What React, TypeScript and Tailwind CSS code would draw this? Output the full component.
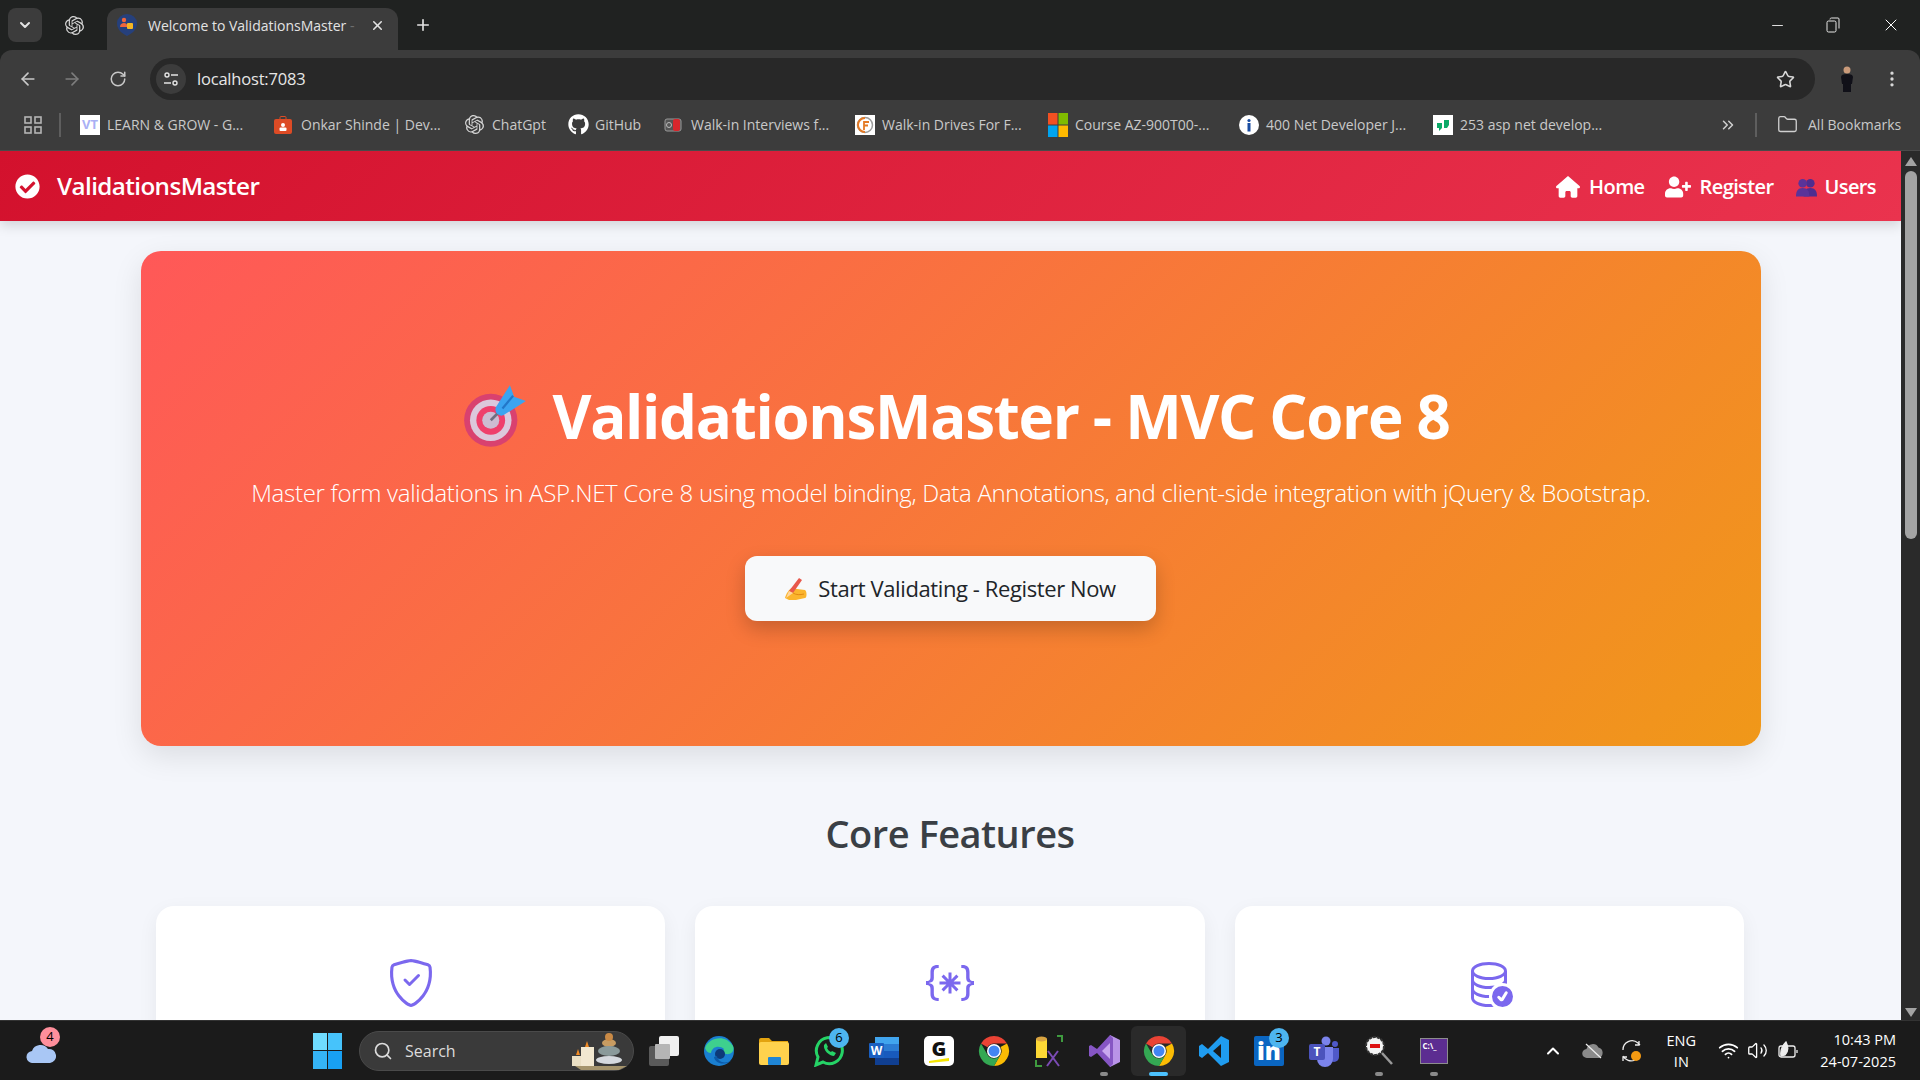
import { ArrowLeft, ArrowRight, ChevronDown, ChevronUp, ChevronsRight, EllipsisVertical, Folder, Minus, Plus, RotateCw, Search, Star, Volume2, Wifi, X } from "lucide-react";
import { BsBracesAsterisk, BsDatabaseCheck, BsShieldCheck } from "react-icons/bs";
import { FaCheckCircle, FaGithub, FaUserPlus } from "react-icons/fa";
import { FaHouse } from "react-icons/fa6";
import { SiOpenai } from "react-icons/si";

const font = "font-['Open_Sans',sans-serif]";

function MsLogo() {
  return (
    <svg width="20" height="24" viewBox="0 0 20 24">
      <rect width="9.500" height="11.500" fill="#f25022" />
      <rect x="10.500" width="9.500" height="11.500" fill="#7fba00" />
      <rect y="12.500" width="9.500" height="11.500" fill="#00a4ef" />
      <rect x="10.500" y="12.500" width="9.500" height="11.500" fill="#ffb900" />
    </svg>
  );
}

const bookmarks = [
  { label: "LEARN & GROW - G...", width: "w-[194px]", icon: <span className="flex h-5 w-5 items-center justify-center bg-white text-[13px] font-bold text-[#aab0f5]">VT</span> },
  { label: "Onkar Shinde | Dev...", width: "w-[191px]", icon: <svg width="18" height="18" viewBox="0 0 18 18"><rect y="3" width="18" height="15" rx="2" fill="#dd4b25" /><rect x="6" y="0.500" width="6" height="4" rx="1" fill="none" stroke="#dd4b25" /><circle cx="9" cy="9" r="2" fill="#fff" /><rect x="5.500" y="11.500" width="7" height="3.500" rx="1" fill="#fff" /></svg> },
  { label: "ChatGpt", width: "w-[103px]", icon: <SiOpenai size={19} className="text-[#d5d5d5]" /> },
  { label: "GitHub", width: "w-[96px]", icon: <FaGithub size={21} className="text-white" /> },
  { label: "Walk-in Interviews f...", width: "w-[191px]", icon: <svg width="18" height="18" viewBox="0 0 18 18"><rect x="1" y="3" width="16" height="12" rx="2" fill="#555" stroke="#999" /><circle cx="5" cy="9" r="2.500" fill="none" stroke="#bbb" /><rect x="9" y="3" width="7" height="12" rx="2" fill="#d8262c" /></svg> },
  { label: "Walk-in Drives For F...", width: "w-[193px]", icon: <svg width="20" height="20" viewBox="0 0 20 20"><rect width="20" height="20" fill="#fff" /><circle cx="10" cy="10" r="7.500" fill="none" stroke="#9a9a9a" strokeWidth="1.500" /><path d="M10 3a7 7 0 0 0 0 14" fill="none" stroke="#e47a25" strokeWidth="2" /><path d="M9 15V7h5M9 10.500h4" fill="none" stroke="#e47a25" strokeWidth="1.800" /></svg> },
  { label: "Course AZ-900T00-...", width: "w-[191px]", icon: <MsLogo /> },
  { label: "400 Net Developer J...", width: "w-[194px]", icon: <svg width="20" height="20" viewBox="0 0 20 20"><circle cx="10" cy="10" r="10" fill="#fff" /><circle cx="10" cy="5.500" r="1.600" fill="#1a4da1" /><rect x="8.500" y="8" width="3" height="8.500" fill="#1a4da1" /></svg> },
  { label: "253 asp net develop...", width: "w-[180px]", icon: <svg width="20" height="20" viewBox="0 0 20 20"><rect width="20" height="20" fill="#fff" /><path d="M4 8h5v5l-3 3v-3H4zM11 5h5v5l-2 3h-3z" fill="#0caa68" /></svg> },
];

function TargetEmoji() {
  return (
    <svg width="66" height="66" viewBox="0 0 62 62">
      <circle cx="27" cy="35" r="25" fill="#d9416f" />
      <circle cx="27" cy="35" r="19.500" fill="#dcc8dc" />
      <circle cx="27" cy="35" r="13.500" fill="#ef3f6c" />
      <circle cx="27" cy="35" r="8" fill="#cdbcd2" />
      <path d="M27 35 42 20" stroke="#6f6f80" strokeWidth="2.500" />
      <path d="M33 21 45 2l4 11 11 4-19 12a5 5 0 0 1-8-8z" fill="#3ba4f0" />
      <path d="M38 24 48 12" stroke="#2277c8" strokeWidth="2" />
    </svg>
  );
}

function HandEmoji() {
  return (
    <svg width="24" height="24" viewBox="0 0 24 24">
      <path d="M1 21c1-4 4-9 7-10l5 1 8 1c2 1 2 8 0 8l-9 2H5z" fill="#fbb52d" />
      <path d="M5 14 15 1l3 2-9 13z" fill="#e8584c" />
      <path d="M2 21 5 14l4 2z" fill="#ffd7a0" />
      <path d="M9 16c3 2 7 2 11 1" stroke="#e38a12" fill="none" />
    </svg>
  );
}

function UsersEmoji() {
  return (
    <svg width="21" height="20" viewBox="0 0 22 20" fill="#4f2d8f">
      <circle cx="15" cy="6" r="4.500" />
      <path d="M8 20c0-6 2-9 7-9s7 3 7 9z" />
      <circle cx="7" cy="6" r="4.500" fill="#5a3399" />
      <path d="M0 20c0-6 2-9 7-9s7 3 7 9z" fill="#5a3399" />
    </svg>
  );
}

function TopChrome() {
  return (
    <div className="shrink-0 bg-[#202221]">
      <div className="flex h-[50px] items-center">
        <div className="ml-2 flex h-[34px] w-[34px] items-center justify-center rounded-lg bg-[#3c3c3c] text-[#e3e3e3]">
          <ChevronDown size={16} strokeWidth={3} />
        </div>
        <div className="flex w-[65px] items-center justify-center text-[#d5d5d5]">
          <SiOpenai size={19} />
        </div>
        <div className="flex h-[42px] w-[291px] items-center self-end rounded-t-xl bg-[#3c3c3c] pb-[8px] pl-2.5">
          <svg width="20" height="22" viewBox="0 0 20 22">
            <path d="M10 22C4 19 0 15 0 9a10 9 0 0 1 20 0c0 6-4 10-10 13z" fill="#26407c" />
            <circle cx="7" cy="6" r="2.200" fill="#f0663c" />
            <path d="M3 13c0-3 2-4 4-4s3 1 3 2v2z" fill="#f0663c" />
            <rect x="10" y="9" width="6" height="6" rx="1" fill="#f5b623" />
          </svg>
          <span className="ml-[11px] w-[208px] text-[14px] whitespace-nowrap text-[#e3e3e3]">
            Welcome to ValidationsMaster <span className="opacity-30">-</span>
          </span>
          <X size={15} strokeWidth={2.500} className="ml-[14px] text-[#e3e3e3]" />
        </div>
        <Plus size={18} strokeWidth={2.200} className="ml-[16px] text-[#e3e3e3]" />
        <div className="flex-1" />
        <Minus size={17} strokeWidth={1.200} className="mr-[40px] text-white" />
        <svg width="14" height="16" viewBox="0 0 14 16" fill="none" stroke="#e8e8e8" className="mr-[41px]">
          <rect x="1" y="4" width="9" height="11" rx="1.500" />
          <path d="M4 2.500c0-1 .5-1.500 1.500-1.500H12c.6 0 1 .4 1 1v9.500" />
        </svg>
        <X size={20} strokeWidth={1.200} className="mr-[19px] text-white" />
      </div>
      <div className="flex h-[50px] items-center rounded-t-xl bg-[#3c3c3c] pt-[8px]">
        <ArrowLeft size={20} className="ml-[18px] text-[#c8c8c8]" />
        <ArrowRight size={20} className="ml-[24px] text-[#7d7d7d]" />
        <RotateCw size={18} className="ml-[27px] text-[#c8c8c8]" />
        <div className="ml-[23px] flex h-[42px] flex-1 items-center rounded-full bg-[#282828] pl-1.5">
          <span className="flex h-[30px] w-[30px] items-center justify-center rounded-full bg-[#3c3c3c]">
            <svg width="16" height="16" viewBox="0 0 16 16" fill="none" stroke="#e3e3e3" strokeWidth="1.400">
              <circle cx="4" cy="4" r="2" />
              <path d="M8 4h7M1 12h7" />
              <circle cx="12" cy="12" r="2" />
            </svg>
          </span>
          <span className="ml-[11px] text-[16.500px] tracking-[-0.2px] text-[#e6e6e6]">localhost:7083</span>
          <div className="flex-1" />
          <Star size={19} className="mr-[20px] text-[#d8d8d8]" />
        </div>
        <svg width="16" height="28" viewBox="0 0 16 28" className="ml-[24px]">
          <circle cx="8" cy="5" r="3.500" fill="#c99a7a" />
          <path d="M2 12c0-2 2-3 6-3s6 1 6 3l-1 7H3z" fill="#101018" />
          <rect x="4" y="18" width="8" height="9" fill="#101018" />
        </svg>
        <EllipsisVertical size={20} className="mr-[18px] ml-[27px] text-[#d8d8d8]" />
      </div>
      <div className="flex h-[51px] items-center border-b border-[#4a4a4a] bg-[#3c3c3c] pb-[1px] text-[14px] text-[#c9c9c9]">
        <svg width="18" height="18" viewBox="0 0 18 18" fill="none" stroke="#b5b5b5" strokeWidth="1.600" className="ml-[24px]">
          <rect x="1" y="1" width="6" height="6" />
          <rect x="11" y="1" width="6" height="6" />
          <rect x="1" y="11" width="6" height="6" />
          <rect x="11" y="11" width="6" height="6" />
        </svg>
        <span className="mr-[19px] ml-[17px] h-[24px] w-[2px] bg-[#5e5e5e]" />
        {bookmarks.map((b) => (
          <div key={b.label} className={`flex items-center whitespace-nowrap ${b.width}`}>
            <span className="flex w-[27px] shrink-0">{b.icon}</span>
            <span>{b.label}</span>
          </div>
        ))}
        <ChevronsRight size={18} className="ml-[106px] text-[#d0d0d0]" />
        <span className="ml-[18px] h-[24px] w-[2px] bg-[#5e5e5e]" />
        <Folder size={21} strokeWidth={1.500} className="ml-[20px] text-[#d0d0d0]" />
        <span className="ml-[10px]">All Bookmarks</span>
      </div>
    </div>
  );
}

function Scrollbar() {
  return (
    <div className="flex w-[19px] shrink-0 flex-col items-center bg-[#2a2a2a] pt-[6px]">
      <span className="h-0 w-0 border-x-[6px] border-b-[9px] border-x-transparent border-b-[#a3a3a3]" />
      <span className="mt-[5px] h-[368px] w-[12px] rounded-full bg-[#a3a3a3]" />
      <div className="flex-1" />
      <span className="mb-[3px] h-0 w-0 border-x-[6px] border-t-[9px] border-x-transparent border-t-[#a3a3a3]" />
    </div>
  );
}

const features = [
  <BsShieldCheck key="shield" size={48} />,
  <BsBracesAsterisk key="braces" size={48} />,
  <BsDatabaseCheck key="database" size={48} />,
];

function Page() {
  return (
    <div className="min-w-0 flex-1 overflow-hidden bg-[#f4f6fb]">
      <nav className="flex h-[70px] items-center bg-[linear-gradient(135deg,#d3112d,#ea334e)] pt-[1px] pr-[25px] pl-[15px] text-white shadow-[0_4px_12px_rgba(0,0,0,0.15)]">
        <FaCheckCircle size={25} />
        <span className="ml-[17px] text-[24.250px] font-semibold tracking-[-0.6px]">ValidationsMaster</span>
        <div className="flex-1" />
        <FaHouse size={24} />
        <span className="ml-[9px] text-[20px] font-semibold tracking-[-0.6px]">Home</span>
        <FaUserPlus size={26} className="ml-[20px]" />
        <span className="ml-[9px] text-[20px] font-semibold tracking-[-0.6px]">Register</span>
        <span className="ml-[22px]"><UsersEmoji /></span>
        <span className="ml-[8px] text-[20px] font-semibold tracking-[-0.6px]">Users</span>
      </nav>
      <div className="pt-[30px] pr-[140px] pl-[141px]">
        <section className="flex h-[495px] flex-col items-center rounded-[20px] bg-[linear-gradient(135deg,#ff5858,#f09819)] pt-[127px] text-white shadow-[0_10px_30px_rgba(0,0,0,0.1)]">
          <h1 className="flex items-center pl-[10px] text-[60px] leading-[76px] font-bold tracking-[-1.300px]">
            <TargetEmoji />
            <span className="ml-[24px]">ValidationsMaster - MVC Core 8</span>
          </h1>
          <p className="mt-[20px] text-[24px] leading-[38px] font-light tracking-[-0.3px]">
            Master form validations in ASP.NET Core 8 using model binding, Data Annotations, and client-side integration with jQuery &amp; Bootstrap.
          </p>
          <a className="mt-[44px] mr-[2px] flex h-[65px] w-[411px] items-center justify-center rounded-xl bg-[#f8f9fa] text-[22px] text-[#212529] shadow-[0_8px_20px_rgba(0,0,0,0.2)]">
            <HandEmoji />
            <span className="ml-[10px] tracking-[-0.4px]">Start Validating - Register Now</span>
          </a>
        </section>
        <h2 className="mt-[58px] pr-[2px] text-center text-[38px] leading-[58px] font-semibold tracking-[-0.5px] text-[#3a3f45]">Core Features</h2>
        <div className="mt-[44px] grid grid-cols-3 gap-[30px] pr-[17px] pl-[15px]">
          {features.map((icon) => (
            <div key={icon.key} className="flex h-[260px] justify-center rounded-[18px] bg-white pt-[53px] text-[#7b68ee] shadow-[0_6px_20px_rgba(0,0,0,0.06)]">
              {icon}
            </div>
          ))}
        </div>
      </div>
    </div>
  );
}

const taskIcons = [
  { key: "files", dot: false, badge: "", icon: <svg width="32" height="32" viewBox="0 0 32 32"><rect x="1" y="11" width="20" height="20" rx="2" fill="#5a5a5a" /><rect x="11" y="1" width="20" height="20" rx="2" fill="#f0f0f0" /><rect x="7" y="9" width="15" height="15" rx="1" fill="#b5b5b5" /></svg> },
  { key: "edge", dot: false, badge: "", icon: <svg width="32" height="32" viewBox="0 0 32 32"><circle cx="16" cy="16" r="15" fill="#1a7fd1" /><path d="M2 13C5 3 22-2 30 11c2 5-2 9-7 8-3-1-3-3-2-5-4-4-12-3-13 4-3 0-5-2-6-5z" fill="#3ed08e" /><circle cx="17" cy="19" r="5" fill="#0d3a78" /><path d="M11 22c1 6 9 9 17 4-7 3-13 1-14-5z" fill="#0c5aa8" /></svg> },
  { key: "explorer", dot: false, badge: "", icon: <svg width="32" height="32" viewBox="0 0 32 32"><path d="M1 5a2 2 0 0 1 2-2h8l3 3h16v5H1z" fill="#e3a30f" /><rect x="1" y="7" width="30" height="23" rx="2" fill="#ffd24d" /><rect x="10" y="22" width="13" height="8" rx="1" fill="#1f86d6" /></svg> },
  { key: "whatsapp", dot: false, badge: "6", icon: <svg width="32" height="32" viewBox="0 0 32 32" fill="none"><path d="M3 30l2-8a13 13 0 1 1 5 5z" stroke="#25d366" strokeWidth="3" /><path d="M11 10c-1 5 5 11 10 11l2-3-4-2-1 1c-2-1-3-2-4-4l1-1-2-4z" fill="#25d366" /></svg> },
  { key: "word", dot: false, badge: "", icon: <svg width="32" height="32" viewBox="0 0 32 32"><rect x="7" y="2" width="24" height="7" fill="#41a5ee" /><rect x="7" y="9" width="24" height="7" fill="#2b7cd3" /><rect x="7" y="16" width="24" height="7" fill="#185abd" /><rect x="7" y="23" width="24" height="7" fill="#103f91" /><rect x="1" y="8" width="15" height="15" rx="1" fill="#1a5fc0" /><text x="8.500" y="20" textAnchor="middle" fontSize="12" fontWeight="700" fill="#fff" fontFamily="Open Sans, sans-serif">W</text></svg> },
  { key: "grammarly", dot: false, badge: "", icon: <svg width="32" height="32" viewBox="0 0 32 32"><rect x="1" y="1" width="30" height="30" rx="5" fill="#fff" /><text x="16" y="21" textAnchor="middle" fontSize="20" fontWeight="800" fill="#111" fontFamily="Open Sans, sans-serif">G</text><path d="M6 26l20-3v3l-20 2z" fill="#f5e500" /></svg> },
  { key: "chrome", dot: false, badge: "", icon: <ChromeIcon /> },
  { key: "ssms", dot: false, badge: "", icon: <svg width="32" height="34" viewBox="0 0 32 34" fill="none"><path d="M3 5h11v19H3z" fill="#fdd835" /><ellipse cx="8.500" cy="5" rx="5.500" ry="2.500" fill="#d9a441" /><path d="M24 2h5v6M3 26v6h6" stroke="#3f9b3f" strokeWidth="2" /><path d="M14 32l11-15M26 32 15 17" stroke="#7b4bb5" strokeWidth="2" /></svg> },
  { key: "vs", dot: true, badge: "", icon: <svg width="32" height="34" viewBox="0 0 32 34"><path d="M22 1l10 5v22l-10 5z" fill="#b993e8" /><path d="M22 1 9 15 3 11 1 12v10l2 1 6-4 13 14 3-3V4z" fill="#8656c4" /><path d="M22 9v16l-8-8z" fill="#c9a8ef" /></svg> },
  { key: "chrome-active", dot: false, badge: "", icon: <ChromeIcon /> },
  { key: "vscode", dot: false, badge: "", icon: <svg width="32" height="32" viewBox="0 0 32 32"><path d="M23 1l8 4v22l-8 4L10 18l-6 5-3-2V11l3-2 6 5zM23 9l-8 7 8 7z" fill="#1f9cf0" /></svg> },
  { key: "linkedin", dot: false, badge: "3", icon: <svg width="32" height="32" viewBox="0 0 32 32"><rect x="1" y="1" width="30" height="30" rx="2" fill="#0a66c2" /><text x="16" y="25" textAnchor="middle" fontSize="24" fontWeight="800" fill="#fff" fontFamily="Open Sans, sans-serif">in</text></svg> },
  { key: "teams", dot: false, badge: "", icon: <svg width="32" height="32" viewBox="0 0 32 32"><circle cx="18" cy="6" r="4.500" fill="#7b83eb" /><circle cx="27" cy="9" r="3" fill="#5059c9" /><path d="M21 13h10v9a5 5 0 0 1-10 0z" fill="#5059c9" /><path d="M9 12h16v12a8 8 0 0 1-16 0z" fill="#7b83eb" /><rect x="1" y="9" width="16" height="16" rx="2" fill="#4b53bc" /><text x="9" y="21" textAnchor="middle" fontSize="12" fontWeight="700" fill="#fff" fontFamily="Open Sans, sans-serif">T</text></svg> },
  { key: "zoomit", dot: true, badge: "", icon: <svg width="30" height="32" viewBox="0 0 30 32" fill="none"><circle cx="11" cy="11" r="9" fill="#f4f4f4" stroke="#333" strokeWidth="2" strokeDasharray="3 1" /><rect x="6" y="9" width="10" height="4" fill="#d11" /><path d="M18 18l10 11" stroke="#999" strokeWidth="2.500" /></svg> },
  { key: "terminal", dot: true, badge: "", icon: <span className="flex h-[26px] w-[28px] items-start border border-[#8d8d8d] bg-[#5c2d91] p-[2px] text-[8px] leading-[9px] font-bold text-white">C:\_</span> },
];

function ChromeIcon() {
  return (
    <svg width="32" height="32" viewBox="0 0 32 32">
      <path d="M16 1a15 15 0 0 1 13 7.500H16a7.500 7.500 0 0 0-6.500 3.750L3 8.500A15 15 0 0 1 16 1z" fill="#ea4335" />
      <path d="M29 8.500A15 15 0 0 1 16 31l6.500-11.250A7.500 7.500 0 0 0 22.500 12z" fill="#fbbc04" />
      <path d="M16 31A15 15 0 0 1 3 8.500l6.500 11.250A7.500 7.500 0 0 0 22.500 19.750z" fill="#34a853" />
      <circle cx="16" cy="16" r="7" fill="#fff" />
      <circle cx="16" cy="16" r="5.500" fill="#4285f4" />
    </svg>
  );
}

function Taskbar() {
  return (
    <div className="flex h-[60px] shrink-0 items-center border-t border-[#333] bg-[#1b1b1b] text-white">
      <div className="relative ml-[26px] w-[30px]">
        <svg width="30" height="20" viewBox="0 0 30 20" className="mt-[5px]">
          <path d="M7 20a6 6 0 0 1-1-12 9 9 0 0 1 16-2 7 7 0 0 1 2 14z" fill="#a9c7f5" />
        </svg>
        <span className="absolute -top-[11px] left-[14px] flex h-5 w-5 items-center justify-center rounded-full bg-[#ff8f9c] text-[13px] text-black">4</span>
      </div>
      <svg width="30" height="36" viewBox="0 0 30 36" className="ml-[257px]">
        <rect x="0" y="0" width="14" height="17" fill="#6fdcff" />
        <rect x="15" y="0" width="14" height="17" fill="#46c3fb" />
        <rect x="0" y="18" width="14" height="18" fill="#35b4f6" />
        <rect x="15" y="18" width="14" height="18" fill="#18a0f3" />
      </svg>
      <div className="ml-[16px] flex h-[40px] w-[275px] items-center rounded-full border border-[#4a4a4a] bg-[#3a3a3a] pl-[13px]">
        <Search size={20} className="text-[#dcdcdc]" />
        <span className="ml-[12px] text-[16px] text-[#dcdcdc]">Search</span>
        <div className="flex-1" />
        <svg width="60" height="38" viewBox="0 0 60 38" className="mr-[2px]">
          <rect x="1" y="24" width="13" height="10" fill="#eadfc4" />
          <rect x="10" y="15" width="13" height="19" fill="#f2e8d0" />
          <path d="M16 9l2 6h-4zM7 17l2 6H5z" fill="#f08a24" />
          <ellipse cx="38" cy="11" rx="7" ry="4" fill="#c79c62" />
          <circle cx="38" cy="5" r="4" fill="#c98a46" />
          <ellipse cx="38" cy="19" rx="11" ry="5" fill="#8a9a9a" />
          <ellipse cx="38" cy="28" rx="13" ry="4" fill="#d5d9de" />
          <path d="M4 34h52l-8 4H10z" fill="#a5946c" />
        </svg>
      </div>
      <div className="ml-[2px] flex">
        {taskIcons.map((t) => (
          <div key={t.key} className={`relative flex h-[50px] w-[55px] items-center justify-center ${t.key === "chrome-active" ? "rounded-md bg-[#2a2a2a]" : ""}`}>
            {t.icon}
            {t.badge && <span className="absolute top-[2px] right-[7px] flex h-5 w-5 items-center justify-center rounded-full bg-[#4db5f0] text-[13px] text-black">{t.badge}</span>}
            {t.dot && <span className="absolute bottom-0 h-[4px] w-[8px] rounded-full bg-[#8a8a8a]" />}
            {t.key === "chrome-active" && <span className="absolute bottom-0 h-[4px] w-[19px] rounded-full bg-[#4cc2ff]" />}
          </div>
        ))}
      </div>
      <div className="flex-1" />
      <ChevronUp size={20} strokeWidth={2.400} />
      <svg width="22" height="16" viewBox="0 0 22 16" className="ml-[19px]">
        <path d="M5 15a4.500 4.500 0 0 1-.5-9 6.500 6.500 0 0 1 12-1.500A5.500 5.500 0 0 1 17 15z" fill="#8a8a8a" />
        <path d="M4 1l15 14" stroke="#eee" strokeWidth="1.200" />
      </svg>
      <svg width="22" height="24" viewBox="0 0 22 24" fill="none" stroke="#eee" strokeWidth="1.300" className="ml-[17px]">
        <path d="M2 11A9 9 0 0 1 17 4l2 2M18 2v4h-4M14 21a9 9 0 0 1-12-4M2 22v-4h4" />
        <circle cx="15" cy="17" r="5" fill="#f59a12" stroke="none" />
      </svg>
      <div className="ml-[19px] flex w-[38px] flex-col items-center text-[14.500px] leading-[21px]">
        <span>ENG</span>
        <span>IN</span>
      </div>
      <Wifi size={21} className="ml-[18px]" />
      <Volume2 size={21} className="ml-[8px]" strokeWidth={1.500} />
      <svg width="22" height="20" viewBox="0 0 22 20" fill="none" stroke="#eee" strokeWidth="1.300" className="ml-[9px]">
        <rect x="2" y="5" width="16" height="11" rx="2" />
        <path d="M20 9v3" />
        <path d="M4 15C3 9 6 4 9 1c2 4 3 9-1 13z" fill="#eee" />
      </svg>
      <div className="mr-[24px] ml-[21px] flex flex-col items-end text-[14.500px] leading-[22px]">
        <span>10:43 PM</span>
        <span>24-07-2025</span>
      </div>
    </div>
  );
}

export default function App() {
  return (
    <div className={`flex h-screen flex-col overflow-hidden ${font}`}>
      <TopChrome />
      <div className="flex min-h-0 flex-1">
        <Page />
        <Scrollbar />
      </div>
      <Taskbar />
    </div>
  );
}
